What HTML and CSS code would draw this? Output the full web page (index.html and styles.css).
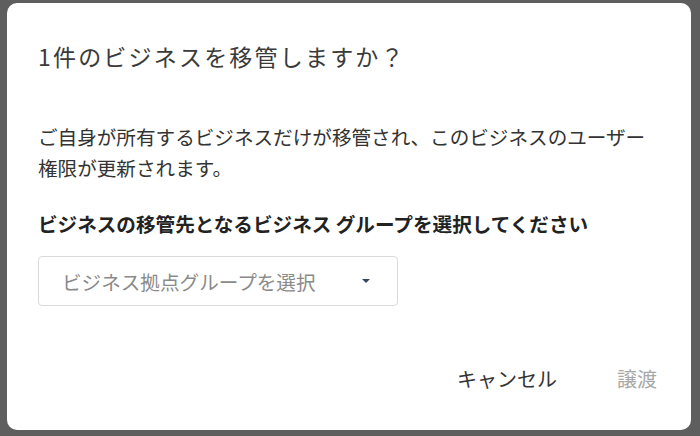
FILE: index.html
```html
<!DOCTYPE html>
<html lang="ja">
<head>
<meta charset="utf-8">
<link rel="stylesheet" href="styles.css">
</head>
<body>
<div class="dialog">
  <h1 class="title">1件のビジネスを移管しますか？</h1>
  <p class="desc">ご自身が所有するビジネスだけが移管され、このビジネスのユーザー権限が更新されます。</p>
  <div class="label">ビジネスの移管先となるビジネス グループを選択してください</div>
  <div class="select">
    <span class="placeholder">ビジネス拠点グループを選択</span>
    <span class="arrow"></span>
  </div>
  <div class="footer">
    <button class="btn">キャンセル</button>
    <button class="btn disabled">譲渡</button>
  </div>
</div>
</body>
</html>
```

FILE: styles.css
```css
html, body {
  margin: 0;
  padding: 0;
  background: #5e5e5e;
  height: 100%;
  overflow: hidden;
}
body {
  font-family: "Noto Sans CJK JP", "Noto Sans", sans-serif;
  color: #333;
}
.dialog {
  box-sizing: border-box;
  margin: 3px 0 0 7px;
  width: 684px;
  height: 427px;
  background: #fff;
  border-radius: 10px;
  padding: 0 0 0 31px;
  display: flex;
  flex-direction: column;
}
.title {
  margin: 39px 0 0;
  font-size: 23px;
  font-weight: 400;
  line-height: 28px;
  letter-spacing: 2.2px;
  color: #3a3a3a;
}
.desc {
  margin: 51px 0 0;
  width: 620px;
  font-size: 19.6px;
  line-height: 31px;
  color: #333;
}
.label {
  margin-top: 29px;
  font-size: 19.6px;
  line-height: 24px;
  font-weight: 700;
  color: #222;
}
.select {
  margin-top: 20px;
  box-sizing: border-box;
  width: 360px;
  height: 50px;
  border: 1px solid #dadada;
  border-radius: 4px;
  display: flex;
  align-items: center;
  justify-content: space-between;
  padding: 0 27px 0 23px;
}
.placeholder {
  font-size: 19.6px;
  color: #8a8a8a;
}
.arrow {
  width: 0;
  height: 0;
  border-left: 4px solid transparent;
  border-right: 4px solid transparent;
  border-top: 4px solid #34475f;
}
.footer {
  margin-top: 61px;
  display: flex;
  justify-content: flex-end;
  gap: 60px;
  padding-right: 34px;
}
.btn {
  background: none;
  border: none;
  padding: 0;
  font-family: inherit;
  font-size: 20px;
  line-height: 24px;
  color: #333;
}
.btn.disabled {
  color: #a8a8a8;
}
```
